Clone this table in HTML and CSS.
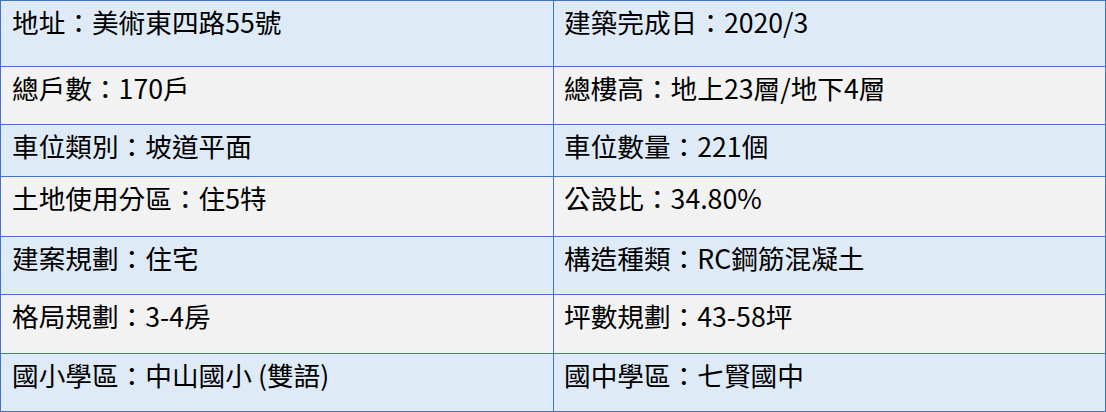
FILE: index.html
```html
<!DOCTYPE html>
<html lang="zh-Hant">
<head>
<meta charset="utf-8">
<link rel="stylesheet" href="styles.css">
</head>
<body>
<div class="info">
  <div class="cell r1 blue">地址：美術東四路55號</div>
  <div class="cell r1 blue">建築完成日：2020/3</div>
  <div class="cell gray">總戶數：170戶</div>
  <div class="cell gray">總樓高：地上23層/地下4層</div>
  <div class="cell blue">車位類別：坡道平面</div>
  <div class="cell blue">車位數量：221個</div>
  <div class="cell gray">土地使用分區：住5特</div>
  <div class="cell gray">公設比：34.80%</div>
  <div class="cell blue">建案規劃：住宅</div>
  <div class="cell blue">構造種類：RC鋼筋混凝土</div>
  <div class="cell gray">格局規劃：3-4房</div>
  <div class="cell gray">坪數規劃：43-58坪</div>
  <div class="cell blue">國小學區：中山國小 (雙語)</div>
  <div class="cell blue">國中學區：七賢國中</div>
</div>
</body>
</html>
```
FILE: styles.css
```css
html, body {
  margin: 0;
  padding: 0;
  background: #ffffff;
}
.info {
  width: 1106px;
  height: 412px;
  box-sizing: border-box;
  display: grid;
  grid-template-columns: 552px 551px;
  grid-template-rows: 65px 57px 51px 59px 57px 58px 57px;
  gap: 1px;
  padding: 1px;
  background: #4472c4;
  font-family: "Noto Sans CJK TC", "Noto Sans", sans-serif;
  font-size: 26.67px;
  font-weight: 400;
  color: #000000;
}
.cell {
  padding: 4px 0 0 11px;
  line-height: 34px;
  white-space: nowrap;
}
.cell:nth-child(even) {
  padding-left: 10px;
}
.blue {
  background: #deeaf6;
}
.gray {
  background: #f2f2f2;
}
```
